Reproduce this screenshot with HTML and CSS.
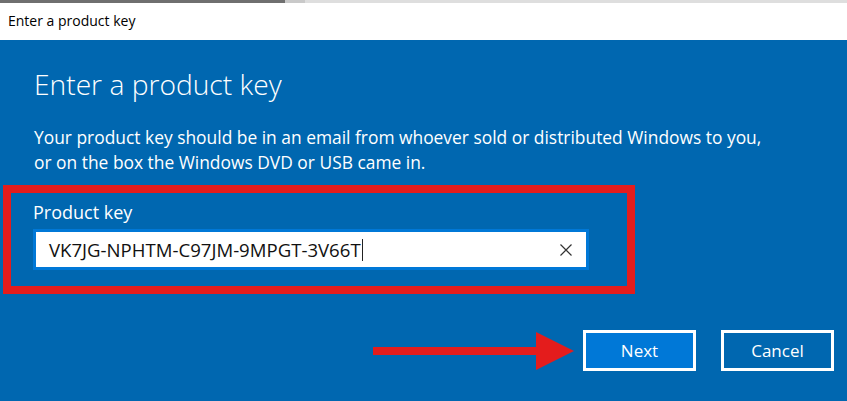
FILE: index.html
```html
<!DOCTYPE html>
<html>
<head>
<meta charset="utf-8">
<link rel="stylesheet" href="styles.css">
</head>
<body>
<div class="topline"></div>
<div class="titlebar">Enter a product key</div>
<div class="dialog">
  <h1 class="heading">Enter a product key</h1>
  <p class="desc">Your product key should be in an email from whoever sold or distributed Windows to you,<br>or on the box the Windows DVD or USB came in.</p>
  <div class="highlight">
    <div class="label">Product key</div>
    <div class="field">
      <span class="value">VK7JG-NPHTM-C97JM-9MPGT-3V66T</span><span class="caret"></span>
      <svg class="clear" width="12" height="12" viewBox="0 0 12 12"><path d="M0.5 0.5 L11.5 11.5 M11.5 0.5 L0.5 11.5" stroke="#333" stroke-width="1.2" fill="none"/></svg>
    </div>
  </div>
  <div class="actions">
    <svg class="arrow" width="201" height="38" viewBox="0 0 201 38"><rect x="0" y="15" width="166" height="8" fill="#e41c1c"/><polygon points="163,0 201,19 163,38" fill="#e41c1c"/></svg>
    <button class="btn primary">Next</button>
    <button class="btn">Cancel</button>
  </div>
</div>
</body>
</html>
```
FILE: styles.css
```css
html, body {
  margin: 0;
  padding: 0;
}
body {
  width: 847px;
  height: 401px;
  overflow: hidden;
  background: #0067b0;
  font-family: "Open Sans", "Noto Sans", sans-serif;
}
.topline {
  height: 3px;
  background: linear-gradient(to right, #6f6f6f 0, #6f6f6f 285px, #c9c9c9 285px, #c9c9c9 305px, #dedede 305px);
}
.titlebar {
  height: 37px;
  background: #fff;
  color: #000;
  font-size: 14px;
  line-height: 36px;
  padding-left: 8px;
  box-sizing: border-box;
}
.dialog {
  color: #fff;
  padding-top: 24px;
}
.heading {
  margin: 0 0 0 34px;
  font-weight: 300;
  font-size: 28.2px;
  line-height: 40px;
}
.desc {
  margin: 21px 0 0 34px;
  font-size: 17.4px;
  line-height: 25px;
}
.highlight {
  margin: 10px 0 0 3px;
  width: 632px;
  height: 109px;
  box-sizing: border-box;
  border: 8px solid #e41c1c;
  padding: 7px 0 0 22px;
}
.label {
  font-size: 18px;
  line-height: 24px;
  margin-bottom: 5px;
}
.field {
  width: 556px;
  height: 41px;
  box-sizing: border-box;
  border: 3px solid #0078d7;
  background: #fff;
  display: flex;
  align-items: center;
  padding: 0 14px 0 13px;
  color: #111;
  font-size: 18.6px;
}
.caret {
  width: 1px;
  height: 22px;
  background: #222;
  margin-left: 1px;
}
.clear {
  margin-left: auto;
}
.actions {
  display: flex;
  align-items: center;
  margin: 36px 0 0 373px;
}
.arrow {
  display: block;
  margin-right: 9px;
}
.btn {
  width: 113px;
  height: 41px;
  box-sizing: border-box;
  border: 3px solid #fff;
  background: #0067b0;
  color: #fff;
  font-family: inherit;
  font-size: 17px;
  padding: 0;
}
.btn.primary {
  background: #0078d7;
  margin-right: 25px;
}
```
